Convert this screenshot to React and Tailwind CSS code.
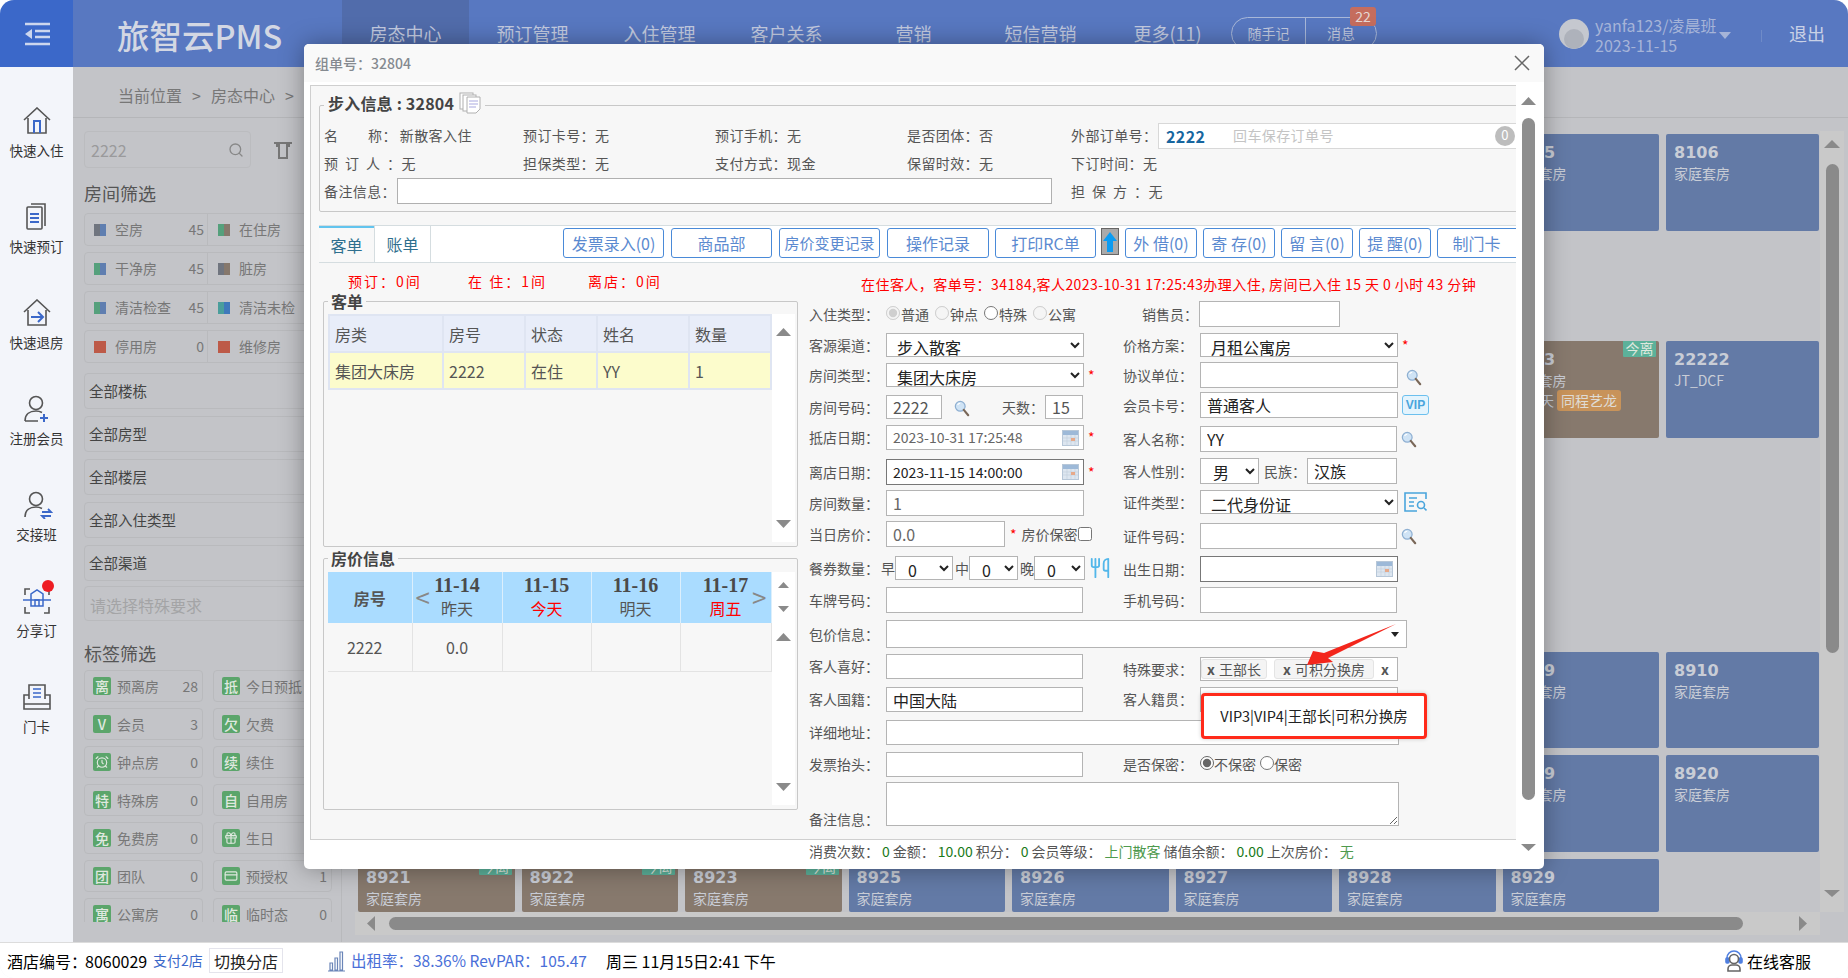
import { AlarmClock, Gift, CreditCard, Utensils, Search } from "lucide-react";

const Tri = ({ dir = "up", w = 15, h = 8, color = "#8a8a8a", className = "" }) => (
  <svg width={w} height={h} viewBox="0 0 10 10" preserveAspectRatio="none" className={className}>
    {dir === "up" && <polygon points="5,0 10,10 0,10" fill={color} />}
    {dir === "down" && <polygon points="0,0 10,0 5,10" fill={color} />}
    {dir === "left" && <polygon points="10,0 10,10 0,5" fill={color} />}
    {dir === "right" && <polygon points="0,0 0,10 10,5" fill={color} />}
  </svg>
);

const Glass = ({ className = "" }) => (
  <svg width="16" height="18" viewBox="0 0 18 20" className={`shrink-0 ${className}`}>
    <circle cx="7" cy="7" r="5.5" fill="#cfe3f5" stroke="#8fb0d2" strokeWidth="1.4" />
    <path d="M4 5.5a3.5 3.5 0 0 1 3-2" stroke="#fff" strokeWidth="1.2" fill="none" />
    <path d="M11 11l5 6" stroke="#7a6859" strokeWidth="2.4" strokeLinecap="round" />
  </svg>
);

const Cal = () => (
  <svg width="17" height="16" viewBox="0 0 17 16" className="ml-auto shrink-0">
    <rect x="0.5" y="0.5" width="16" height="15" fill="#dde6f0" stroke="#b7c7d8" />
    <rect x="1" y="1" width="15" height="4" fill="#9db9d8" />
    <path d="M1 8h15M1 11h15M5 5v10M9 5v10M13 5v10" stroke="#c3d0de" strokeWidth="0.7" />
    <rect x="9" y="8" width="4" height="3" fill="#e6a98a" />
  </svg>
);

const SideItem = ({ label, children }) => (
  <div className="flex flex-col items-center">
    <div className="relative h-[26px] w-[32px]">{children}</div>
    <div className="mt-[7px] h-[20px] text-[13.5px] leading-[20px] text-[#333]">{label}</div>
  </div>
);

const iconProps = { width: 32, height: 28, viewBox: "0 0 32 28", fill: "none", stroke: "#555", strokeWidth: 1.6 };

const Sidebar = () => (
  <div className="flex w-[73px] shrink-0 flex-col items-center gap-[43px] bg-[#f3f5fa] pt-[40px]">
    <SideItem label="快速入住">
      <svg {...iconProps}>
        <path d="M3 13 16 1l13 12M7 11v15h18V11" />
        <path d="M13 26V14h6v12" stroke="#3b68c9" strokeWidth="2" />
      </svg>
    </SideItem>
    <SideItem label="快速预订">
      <svg {...iconProps}>
        <path d="M10 1h14v22" />
        <rect x="6" y="4" width="15" height="22" rx="1" />
        <path d="M9 11h9M9 15h9M9 19h9" stroke="#3b68c9" strokeWidth="2" />
      </svg>
    </SideItem>
    <SideItem label="快速退房">
      <svg {...iconProps}>
        <path d="M3 13 16 1l13 12M7 11v15h18V11" />
        <path d="M10 18h11M17 13l5 5-5 5" stroke="#3b68c9" strokeWidth="2" />
      </svg>
    </SideItem>
    <SideItem label="注册会员">
      <svg {...iconProps}>
        <circle cx="15" cy="8" r="6.5" />
        <path d="M4 26c0-7 5-10 11-10 2 0 4 .4 6 1.500M4 26h13" />
        <path d="M23 19v8M19 23h8" stroke="#3b68c9" strokeWidth="2" />
      </svg>
    </SideItem>
    <SideItem label="交接班">
      <svg {...iconProps}>
        <circle cx="15" cy="8" r="6.500" />
        <path d="M4 26c0-7 5-10 11-10 2 0 4 .4 6 1.500" />
        <path d="M21 21h9l-3-3M30 25h-9l3 3" stroke="#3b68c9" strokeWidth="1.800" />
      </svg>
    </SideItem>
    <SideItem label="分享订">
      <svg {...iconProps}>
        <path d="M9 2H4v6M23 2h5v6M4 20v6h5M28 20v6h-5" />
        <path d="M2 13h28" stroke="#3b68c9" strokeWidth="1.500" />
        <path d="M10 19V7l6-4 6 4v12zM14 19v-6h4v6" stroke="#3b68c9" strokeWidth="1.500" />
      </svg>
      <div className="absolute left-[21px] top-[-7px] h-[12px] w-[12px] rounded-full bg-[#ee1d23]" />
    </SideItem>
    <SideItem label="门卡">
      <svg {...iconProps}>
        <path d="M8 16V2h16v14" />
        <path d="M8 12H3v14h26V12h-5M3 21h26" />
        <path d="M12 6h8M12 10h8M12 14h8" stroke="#3b68c9" strokeWidth="1.500" />
      </svg>
    </SideItem>
  </div>
);

const navs = ["房态中心", "预订管理", "入住管理", "客户关系", "营销", "短信营销", "更多(11)"];

const Header = () => (
  <div className="flex h-[67px] shrink-0">
    <div className="flex w-[73px] items-center justify-center bg-[#3b68c9]">
      <svg width="26" height="24" viewBox="0 0 26 24" fill="none" stroke="#ccd6ee" strokeWidth="2.400">
        <path d="M1 2h25M11 9h15M11 15h15M1 22h25" />
        <polygon points="8,7 8,17 1,12" fill="#ccd6ee" stroke="none" />
      </svg>
    </div>
    <div className="flex flex-1 items-stretch bg-[#5878c1]">
      <div className="w-[269px] pl-[44px] text-[32.500px] font-medium leading-[69px] text-[#d3d7e3]">旅智云PMS</div>
      {navs.map((n, i) => (
        <div key={n} className={`flex w-[127px] items-center justify-center text-[18px] text-[#c3cbe0] ${i === 0 ? "bg-[#516cab]" : ""}`}>
          {n}
        </div>
      ))}
      <div className="relative mt-[17px] flex h-[33px] w-[146px] rounded-full border border-[#a9b8d9] text-[14px] leading-[30px] text-[#c3cbe0]">
        <div className="w-[74px] border-r border-[#a9b8d9] text-center">随手记</div>
        <div className="flex-1 text-center">消息</div>
        <div className="absolute left-[118px] top-[-11px] h-[19px] w-[26px] rounded-[3px] bg-[#c56d5e] text-center text-[14px] leading-[19px] text-[#e6d8d4]">22</div>
      </div>
      <div className="ml-[182px] mt-[19px] flex h-[30px] w-[30px] items-end justify-center overflow-hidden rounded-full bg-[#c5c8cf]">
        <div className="h-[20px] w-[20px] rounded-full bg-[#aeb2bb]" />
      </div>
      <div className="ml-[6px] mt-[15px] w-[118px] text-[16px] leading-[20px] text-[#a6b4d8]">
        <div className="whitespace-nowrap">yanfa123/凌晨班</div>
        <div>2023-11-15</div>
      </div>
      <Tri dir="down" w={12} h={7} color="#a6b4d8" className="ml-[6px] mt-[32px]" />
      <div className="ml-[30px] mt-[30px] h-[12px] border-l border-[#6f8bc8]" />
      <div className="ml-[27px] text-[18px] leading-[67px] text-[#c9d1e6]">退出</div>
    </div>
  </div>
);

const Swatch = ({ a, b }) => (
  <div className="flex h-[12px] w-[12px] shrink-0">
    <div className="w-1/2" style={{ background: a }} />
    <div className="w-1/2" style={{ background: b }} />
  </div>
);

const roomRows = [
  [["空房", 45, "#70757f", "#5f7eb0"], ["在住房", 45, "#55a07c", "#86786c"]],
  [["干净房", 45, "#55a07c", "#5f7eb0"], ["脏房", 45, "#70757f", "#86786c"]],
  [["清洁检查", 45, "#55a07c", "#5f7eb0"], ["清洁未检", 45, "#4a9e9c", "#3f79bb"]],
  [["停用房", 0, "#bd5a48", "#bd5a48"], ["维修房", 0, "#bd5a48", "#bd5a48"]],
];

const tags = [
  ["离", "预离房", 28, "抵", "今日预抵", 0],
  ["V", "会员", 3, "欠", "欠费", 0],
  ["clock", "钟点房", 0, "续", "续住", 0],
  ["特", "特殊房", 0, "自", "自用房", 0],
  ["免", "免费房", 0, "gift", "生日", 0],
  ["团", "团队", 0, "card", "预授权", 1],
  ["寓", "公寓房", 0, "临", "临时态", 0],
];

const TagMark = ({ t }) => (
  <div className="flex h-[18px] w-[18px] shrink-0 items-center justify-center rounded-[2px] bg-[#5ba56b] text-[14px] font-medium leading-none text-[#dfe8df]">
    {t === "clock" ? <AlarmClock size={14} /> : t === "gift" ? <Gift size={14} /> : t === "card" ? <CreditCard size={14} /> : t}
  </div>
);

const Tag = ({ mark, label, count }) => (
  <div className="flex h-[32px] w-[119px] items-center rounded-[4px] border border-[#b9babd] pl-[8px] pr-[4px] text-[14px] text-[#777]">
    <TagMark t={mark} />
    <span className="ml-[6px] flex-1">{label}</span>
    <span>{count}</span>
  </div>
);

const FilterPanel = () => (
  <div className="w-[269px] shrink-0 border-r border-[#b8b9bc] pl-[11px]">
    <div className="mt-[13px] flex items-center">
      <div className="flex h-[37px] w-[167px] items-center justify-between rounded-[4px] border border-[#bbbcbf] px-[6px] text-[16px] text-[#9a9a9c]">
        2222
        <Search size={16} color="#888" />
      </div>
      <svg width="20" height="18" viewBox="0 0 20 18" fill="none" stroke="#777" strokeWidth="2" className="ml-[22px]">
        <path d="M1 2h18M4 2v4M16 2v4M6 2v15h8V2" />
      </svg>
    </div>
    <div className="mt-[13px] h-[24px] text-[18px] leading-[24px] text-[#555]">房间筛选</div>
    <div className="mt-[8px] flex flex-col gap-[6px]">
      {roomRows.map((row, i) => (
        <div key={i} className="flex h-[33px] w-[248px] rounded-[4px] border border-[#b9babd] text-[14px] text-[#777]">
          <div className="flex w-[123px] items-center border-r border-[#b9babd] pl-[9px] pr-[3px]">
            <Swatch a={row[0][2]} b={row[0][3]} />
            <span className="ml-[9px] flex-1">{row[0][0]}</span>
            <span>{row[0][1]}</span>
          </div>
          <div className="flex flex-1 items-center pl-[10px] pr-[3px]">
            <Swatch a={row[1][2]} b={row[1][3]} />
            <span className="ml-[9px] flex-1">{row[1][0]}</span>
            <span>{row[1][1]}</span>
          </div>
        </div>
      ))}
    </div>
    <div className="mt-[10px] flex flex-col gap-[7px]">
      {["全部楼栋", "全部房型", "全部楼层", "全部入住类型", "全部渠道"].map((s) => (
        <div key={s} className="flex h-[36px] w-[248px] items-center rounded-[4px] border border-[#b9babd] pl-[4px] text-[14.5px] text-[#444]">
          {s}
        </div>
      ))}
    </div>
    <div className="mt-[5px] flex h-[35px] w-[248px] items-center rounded-[4px] border border-[#b9babd] pl-[5px] pt-[3px] text-[16px] text-[#a4a4a6]">请选择特殊要求</div>
    <div className="mt-[20px] h-[24px] text-[18px] leading-[24px] text-[#555]">标签筛选</div>
    <div className="mt-[5px] grid h-[252px] w-[248px] grid-cols-[119px_119px] content-start gap-x-[10px] gap-y-[6px] overflow-hidden">
      {tags.map((t) => [
        <Tag key={t[1]} mark={t[0]} label={t[1]} count={t[2]} />,
        <Tag key={t[4]} mark={t[3]} label={t[4]} count={t[5]} />,
      ])}
    </div>
  </div>
);

const RoomCard = ({ no, name = "家庭套房", brown, extra, leave, className = "" }) => (
  <div className={`relative overflow-hidden rounded-[2px] px-[8px] pt-[9px] text-[#c9cdd6] ${brown ? "bg-[#87796d]" : "bg-[#637aa6]"} ${className}`}>
    {leave && <div className="absolute right-[3px] top-[-2px] h-[18px] w-[33px] rounded-[1px] bg-[#5cb19a] text-center text-[14px] leading-[18px] text-[#dfe8df]">今离</div>}
    <div className="font-['DejaVu_Sans',sans-serif] text-[16px] font-bold leading-[20px]">{no}</div>
    <div className="text-[14px] leading-[20px]">{name}</div>
    {extra}
  </div>
);

const RoomGrid = () => (
  <div className="flex h-[794px]">
    <div className="w-[1478px] overflow-hidden pl-[16px]">
      <div className="mt-[16px] grid h-[97px] grid-cols-[repeat(9,156.500px)] gap-x-[7px]">
        <RoomCard no="8105" className="col-start-8" />
        <RoomCard no="8106" className="col-start-9 w-[153px]" />
      </div>
      <div className="mt-[110px] grid h-[97px] grid-cols-[repeat(9,156.500px)] gap-x-[7px]">
        <RoomCard
          no="8103"
          brown
          leave
          className="col-start-8"
          extra={
            <div className="flex items-center text-[14px] leading-[21px]">
              住15天
              <span className="ml-[3px] rounded-[3px] bg-[#c8935a] px-[4px] text-[#dfdcd6]">同程艺龙</span>
            </div>
          }
        />
        <RoomCard no="22222" name="JT_DCF" className="col-start-9 w-[153px]" />
      </div>
      <div className="mt-[214px] grid h-[96px] grid-cols-[repeat(9,156.500px)] gap-x-[7px]">
        <RoomCard no="8909" className="col-start-8" />
        <RoomCard no="8910" className="col-start-9 w-[153px]" />
      </div>
      <div className="mt-[7px] grid h-[97px] grid-cols-[repeat(9,156.500px)] gap-x-[7px]">
        <RoomCard no="8919" className="col-start-8" />
        <RoomCard no="8920" className="col-start-9 w-[153px]" />
      </div>
      <div className="mt-[7px] grid h-[53px] grid-cols-[repeat(9,156.500px)] gap-x-[7px]">
        {["8921", "8922", "8923"].map((n) => (
          <RoomCard
            key={n}
            no={n}
            brown
            leave
            extra={<div className="mt-[10px] ml-[46px] h-[10px] w-[64px] rounded-[3px] bg-[#c8935a]" />}
          />
        ))}
        {["8925", "8926", "8927", "8928", "8929"].map((n) => (
          <RoomCard key={n} no={n} />
        ))}
      </div>
    </div>
    <div className="mt-[13px] flex w-[24px] flex-col items-center bg-[#c9c9c9] pt-[9px] pb-[15px]">
      <Tri w={16} h={8} />
      <div className="mt-[16px] h-[489px] w-[13px] rounded-full bg-[#8a8a8a]" />
      <Tri dir="down" w={16} h={7} className="mt-auto" />
    </div>
  </div>
);

const HScroll = () => (
  <div className="ml-[13px] flex h-[23px] w-[1465px] items-center bg-[#c9c9c9]">
    <Tri dir="left" w={8} h={15} className="ml-[12px]" />
    <div className="ml-[14px] h-[13px] w-[1354px] rounded-full bg-[#8a8a8a]" />
    <Tri dir="right" w={8} h={15} className="ml-[56px]" />
  </div>
);

const BottomBar = () => (
  <div className="flex h-[36px] shrink-0 items-center border-t border-[#dcdcdc] bg-white pl-[7px] text-[16px] text-black">
    <span className="w-[78px] whitespace-nowrap">酒店编号&#xFF1A;</span>
    <span className="w-[68px]">8060029</span>
    <span className="w-[56px] text-[14px] text-[#3b68c9]">支付2店</span>
    <div className="flex h-[25px] w-[74px] items-center justify-center border border-[#e4e4ec] text-[#222]">切换分店</div>
    <svg width="19" height="22" viewBox="0 0 19 22" fill="none" stroke="#6a85b8" strokeWidth="1.200" className="ml-[44px]">
      <path d="M1 21h17M3 20v-7h2.500v7zM8 20V8h2.500v12zM13 20V2h2.500v18z" />
    </svg>
    <span className="ml-[5px] w-[255px] whitespace-nowrap text-[15.500px] text-[#4a6fd8]">出租率&#xFF1A;38.36% RevPAR&#xFF1A;105.47</span>
    <span className="whitespace-nowrap">周三 11月15日2:41 下午</span>
    <svg width="18" height="22" viewBox="0 0 18 22" fill="none" stroke="#4f7fe0" strokeWidth="1.600" className="ml-auto">
      <path d="M2 11V8a7 7 0 0 1 14 0v3" />
      <rect x="1" y="8" width="3" height="5" rx="1" fill="#4f7fe0" />
      <rect x="14" y="8" width="3" height="5" rx="1" fill="#4f7fe0" />
      <circle cx="9" cy="9" r="4.500" stroke="#666" />
      <path d="M3 21v-2a4 4 0 0 1 4-4h4a4 4 0 0 1 4 4v2z" stroke="#666" />
    </svg>
    <span className="ml-[4px] mr-[37px]">在线客服</span>
  </div>
);

const Btn = ({ w, children, gap = "ml-[6px]" }) => (
  <div className={`flex h-[30px] shrink-0 items-center justify-center rounded-[3px] border border-[#4a8ad8] bg-white text-[16px] text-[#5b8ad0] ${w} ${gap}`}>
    {children}
  </div>
);

const Tabs = () => (
  <div className="mt-[13px] ml-[8px] flex h-[38px] w-[1200px] shrink-0 overflow-hidden border-y border-[#d5dde0] bg-white">
    <div className="-mt-px w-[55px] shrink-0 border-t-[3px] border-t-[#62c4ee] bg-[#f8f8f8] pt-[5px] text-center text-[16px] text-[#2e6f8e]">客单</div>
    <div className="w-[57px] shrink-0 border-x border-[#d5dde0] pt-[6px] text-center text-[16px] text-[#2e6f8e]">账单</div>
    <div className="flex items-start pt-[2px]">
      <Btn w="w-[101px]" gap="ml-[132px]">发票录入(0)</Btn>
      <Btn w="w-[101px]" gap="ml-[7px]">商品部</Btn>
      <Btn w="w-[101px]" gap="ml-[7px]"><span className="text-[15px]">房价变更记录</span></Btn>
      <Btn w="w-[102px]" gap="ml-[7px]">操作记录</Btn>
      <Btn w="w-[101px]" gap="ml-[6px]">打印RC单</Btn>
      <div className="ml-[5px] flex h-[27px] w-[18px] items-center justify-center border border-[#666] bg-[#aaa]">
        <svg width="14" height="22" viewBox="0 0 14 22">
          <polygon points="7,1 14,10 10,10 10,21 4,21 4,10 0,10" fill="#0c9cf2" />
        </svg>
      </div>
      <Btn w="w-[72px]">外 借(0)</Btn>
      <Btn w="w-[72px]">寄 存(0)</Btn>
      <Btn w="w-[72px]">留 言(0)</Btn>
      <Btn w="w-[72px]">提 醒(0)</Btn>
      <Btn w="w-[85px]"><span className="pr-[6px]">制门卡</span></Btn>
    </div>
  </div>
);

const Info = ({ children, className = "" }) => <div className={`whitespace-nowrap ${className}`}>{children}</div>;

const StepInfo = () => (
  <fieldset className="ml-[8px] mt-[8px] h-[118px] w-[1215px] rounded-[2px] border border-[#c8c8c8] pl-[4px]">
    <legend className="flex -translate-y-[2px] items-center px-[4px] text-[16px] font-bold leading-[22px] tracking-[0.2px] text-[#444]">
      步入信息 : 32804
      <svg width="22" height="22" viewBox="0 0 22 22" fill="#fff" stroke="#b0b0b0" className="ml-[5px]">
        <rect x="1" y="1" width="13" height="16" />
        <rect x="4" y="3" width="13" height="16" />
        <path d="M8 5h13v12l-4 4H8z" />
        <path d="M10 9h9M10 12h9M10 15h7" stroke="#a9a9df" />
      </svg>
    </legend>
    <div className="mt-[6px] grid grid-cols-[199px_192px_192px_164px_1fr] grid-rows-[27px_27px_26px] items-center gap-y-[1px] text-[14px] tracking-[0.4px] text-[#555]">
      <Info>
        <span className="tracking-[30px]">名</span>称&#xFF1A;<span className="ml-[3px]">新散客入住</span>
      </Info>
      <Info>预订卡号&#xFF1A;无</Info>
      <Info>预订手机&#xFF1A;无</Info>
      <Info>是否团体&#xFF1A;否</Info>
      <div className="flex h-[26px] w-[446px] items-center">
        <span className="w-[87px] whitespace-nowrap">外部订单号&#xFF1A;</span>
        <div className="flex h-full flex-1 items-center border border-[#d8d8d8] bg-white pl-[7px]">
          <span className="w-[67px] text-[16px] font-bold text-[#17669f]">2222</span>
          <span className="text-[#c4c4c4]">回车保存订单号</span>
          <span className="ml-auto mr-[1px] h-[20px] w-[20px] rounded-full bg-[#bdbdbd] text-center text-[13px] leading-[18px] text-white">0</span>
        </div>
      </div>
      <Info>
        <span className="tracking-[7px]">预订人</span>&#xFF1A;无
      </Info>
      <Info>担保类型&#xFF1A;无</Info>
      <Info>支付方式&#xFF1A;现金</Info>
      <Info>保留时效&#xFF1A;无</Info>
      <Info>下订时间&#xFF1A;无</Info>
      <div className="col-span-4 flex h-full items-center">
        <span className="w-[73px] whitespace-nowrap">备注信息&#xFF1A;</span>
        <div className="h-full w-[655px] border border-[#b0b0b0] bg-white" />
      </div>
      <Info>
        <span className="tracking-[7px]">担保方</span>&#xFF1A;无
      </Info>
    </div>
  </fieldset>
);

const thCell = "border-2 border-[#dfe5f2] bg-[#e8edf9] pl-[5px] text-left font-normal";
const tdCell = "border-2 border-[#dfe5f2] bg-[#fcfccc] pl-[5px]";

const ScrollCol = ({ children, h }) => (
  <div className={`flex w-[23px] flex-col items-center bg-white ${h}`}>{children}</div>
);

const OrderBox = () => (
  <fieldset className="h-[257px] w-[475px] rounded-[2px] border border-[#c8c8c8] pl-[4px]">
    <legend className="px-[3px] text-[16px] font-bold leading-[22px] text-[#444]">客单</legend>
    <div className="mt-[2px] flex">
      <table className="h-[75px] w-[442px] table-fixed self-start text-[16px] text-[#555]">
        <colgroup>
          <col className="w-[114px]" />
          <col className="w-[82px]" />
          <col className="w-[72px]" />
          <col className="w-[92px]" />
          <col className="w-[82px]" />
        </colgroup>
        <thead>
          <tr className="h-[37px]">
            {["房类", "房号", "状态", "姓名", "数量"].map((t) => (
              <th key={t} className={thCell}>{t}</th>
            ))}
          </tr>
        </thead>
        <tbody>
          <tr className="h-[37px]">
            {["集团大床房", "2222", "在住", "YY", "1"].map((t) => (
              <td key={t} className={tdCell}>{t}</td>
            ))}
          </tr>
        </tbody>
      </table>
      <ScrollCol h="h-[228px]">
        <Tri w={15} h={8} className="mt-[14px]" />
        <Tri dir="down" w={15} h={8} className="mt-auto mb-[14px]" />
      </ScrollCol>
    </div>
  </fieldset>
);

const days = [
  ["11-14", "昨天", false],
  ["11-15", "今天", true],
  ["11-16", "明天", false],
  ["11-17", "周五", true],
];

const PriceBox = () => (
  <fieldset className="h-[263px] w-[475px] rounded-[2px] border border-[#c8c8c8] pl-[4px]">
    <legend className="px-[3px] text-[16px] font-bold leading-[22px] text-[#444]">房价信息</legend>
    <div className="mt-[3px] flex">
      <table className="w-[443px] table-fixed self-start text-[16px] text-[#555]">
        <colgroup>
          <col className="w-[84px]" />
          <col className="w-[90px]" />
          <col className="w-[89px]" />
          <col className="w-[89px]" />
          <col className="w-[91px]" />
        </colgroup>
        <thead>
          <tr className="h-[51px] bg-[#aadcff]">
            <th className="border-r border-[#dceffc] font-bold">房号</th>
            {days.map((d, i) => (
              <th key={d[0]} className="relative border-r border-[#dceffc] font-normal leading-[23px]">
                <div className="-mt-[2px] font-['Liberation_Serif',serif] text-[20px] font-bold text-[#4a4a4a]">{d[0]}</div>
                <div className={d[2] ? "text-[#f00]" : ""}>{d[1]}</div>
                {i === 0 && <span className="absolute left-[3px] top-[13px] text-[26px] leading-[24px] text-[#888]">&lt;</span>}
                {i === 3 && <span className="absolute right-[4px] top-[13px] text-[26px] leading-[24px] text-[#888]">&gt;</span>}
              </th>
            ))}
          </tr>
        </thead>
        <tbody>
          <tr className="h-[48px] border-b border-[#e3e3e3]">
            <td className="border-r border-[#e3e3e3] pr-[10px] text-center">2222</td>
            <td className="border-r border-[#e3e3e3] text-center">0.0</td>
            <td className="border-r border-[#e3e3e3]" />
            <td className="border-r border-[#e3e3e3]" />
            <td className="border-r border-[#e3e3e3]" />
          </tr>
        </tbody>
      </table>
      <ScrollCol h="h-[233px]">
        <Tri w={11} h={6} className="mt-[10px]" />
        <Tri dir="down" w={11} h={6} className="mt-[18px]" />
        <Tri w={15} h={8} className="mt-[21px]" />
        <Tri dir="down" w={15} h={8} className="mt-auto mb-[14px]" />
      </ScrollCol>
    </div>
  </fieldset>
);

const inputCls = "h-full shrink-0 border border-[#b4b4b4] bg-white px-[6px] text-[16px] text-[#222] outline-none";
const selectCls = "h-full shrink-0 border border-[#b4b4b4] bg-white pl-[6px] text-[16px] text-[#222] outline-none";

const Field = ({ label, className = "", children }) => (
  <div className={`flex items-center ${className}`}>
    <span className="w-[77px] shrink-0 whitespace-nowrap text-[14px] text-[#555]">{label}</span>
    {children}
  </div>
);

const Star = () => <span className="ml-[4px] text-[14px] text-[#f00]">*</span>;

const DateBox = ({ value, dark }) => (
  <div className={`flex h-full w-[198px] shrink-0 items-center border bg-white pl-[6px] pr-[4px] text-[14px] ${dark ? "border-[#777] text-[#222]" : "border-[#b4b4b4] text-[#666]"}`}>
    {value}
    <Cal />
  </div>
);

const Radio = ({ label, checked, disabled }) => (
  <label className="flex items-center text-[14px] text-[#555]">
    <input type="radio" name="t" readOnly checked={checked} disabled={disabled} className="m-0 h-[14px] w-[14px] -translate-y-[2px]" />
    <span className="ml-px">{label}</span>
  </label>
);

const LeftForm = () => (
  <div className="w-[314px] shrink-0">
    <Field label="入住类型&#xFF1A;" className="h-[27px]">
      <div className="flex gap-[6px]">
        <Radio label="普通" checked disabled />
        <Radio label="钟点" disabled />
        <Radio label="特殊" />
        <Radio label="公寓" disabled />
      </div>
    </Field>
    <Field label="客源渠道&#xFF1A;" className="mt-[5px] h-[24px]">
      <select className={`${selectCls} w-[198px]`}><option>步入散客</option></select>
    </Field>
    <Field label="房间类型&#xFF1A;" className="mt-[6px] h-[24px]">
      <select className={`${selectCls} w-[198px]`}><option>集团大床房</option></select>
      <Star />
    </Field>
    <Field label="房间号码&#xFF1A;" className="mt-[8px] h-[24px]">
      <input readOnly value="2222" className={`${inputCls} w-[56px] text-[#555]`} />
      <Glass className="ml-[12px] mt-[4px]" />
      <span className="ml-[32px] w-[43px] whitespace-nowrap text-[14px] text-[#555]">天数&#xFF1A;</span>
      <input readOnly value="15" className={`${inputCls} w-[38px] text-[#555]`} />
    </Field>
    <Field label="抵店日期&#xFF1A;" className="mt-[6px] h-[25px]">
      <DateBox value="2023-10-31 17:25:48" />
      <Star />
    </Field>
    <Field label="离店日期&#xFF1A;" className="mt-[9px] h-[26px]">
      <DateBox value="2023-11-15 14:00:00" dark />
      <Star />
    </Field>
    <Field label="房间数量&#xFF1A;" className="mt-[5px] h-[26px]">
      <input readOnly value="1" className={`${inputCls} w-[198px] text-[#666]`} />
    </Field>
    <Field label="当日房价&#xFF1A;" className="mt-[5px] h-[26px]">
      <input readOnly value="0.0" className={`${inputCls} w-[119px] text-[#666]`} />
      <span className="ml-[5px] text-[14px] text-[#f00]">*</span>
      <span className="ml-[5px] whitespace-nowrap text-[14px] text-[#555]">房价保密</span>
      <input type="checkbox" className="h-[14px] w-[14px]" />
    </Field>
    <Field label="餐券数量&#xFF1A;" className="mt-[9px] h-[24px]">
      <span className="-ml-[5px] w-[14px] text-[14px] text-[#555]">早</span>
      <select className={`${selectCls} w-[58px] pl-[8px]`}><option>0</option></select>
      <span className="ml-[2px] w-[14px] text-[14px] text-[#555]">中</span>
      <select className={`${selectCls} w-[49px] pl-[8px]`}><option>0</option></select>
      <span className="ml-[2px] w-[14px] text-[14px] text-[#555]">晚</span>
      <select className={`${selectCls} w-[51px] pl-[8px]`}><option>0</option></select>
      <Utensils size={22} color="#53b7ea" className="ml-[4px] shrink-0" />
    </Field>
    <Field label="车牌号码&#xFF1A;" className="mt-[7px] h-[26px]">
      <input readOnly className={`${inputCls} w-[197px]`} />
    </Field>
  </div>
);

const RightForm = () => (
  <div className="w-[330px] shrink-0">
    <div className="flex h-[26px] items-center">
      <span className="w-[76px] whitespace-nowrap pl-[19px] text-[14px] text-[#555]">销售员&#xFF1A;</span>
      <input readOnly className={`${inputCls} w-[141px]`} />
    </div>
    <Field label="价格方案&#xFF1A;" className="mt-[6px] h-[24px]">
      <select className={`${selectCls} w-[198px]`}><option>月租公寓房</option></select>
      <Star />
    </Field>
    <Field label="协议单位&#xFF1A;" className="mt-[5px] h-[26px]">
      <input readOnly className={`${inputCls} w-[198px]`} />
      <Glass className="ml-[8px] mt-[6px]" />
    </Field>
    <Field label="会员卡号&#xFF1A;" className="mt-[4px] h-[26px]">
      <input readOnly value="普通客人" className={`${inputCls} w-[198px]`} />
      <div className="ml-[4px] flex h-[20px] w-[27px] shrink-0 items-center justify-center rounded-[3px] border border-[#6cc0ee] bg-[#e4f4fd] font-['Liberation_Sans',sans-serif] text-[12px] font-bold text-[#4aa5dc]">VIP</div>
    </Field>
    <Field label="客人名称&#xFF1A;" className="mt-[8px] h-[26px]">
      <input readOnly value="YY" className={`${inputCls} w-[197px]`} />
      <Glass className="ml-[4px] mt-[2px]" />
    </Field>
    <Field label="客人性别&#xFF1A;" className="mt-[6px] h-[26px]">
      <select className={`${selectCls} w-[59px] pl-[8px]`}><option>男</option></select>
      <span className="ml-[5px] w-[43px] whitespace-nowrap text-[14px] text-[#555]">民族&#xFF1A;</span>
      <input readOnly value="汉族" className={`${inputCls} w-[90px]`} />
    </Field>
    <Field label="证件类型&#xFF1A;" className="mt-[6px] h-[24px]">
      <select className={`${selectCls} w-[198px]`}><option>二代身份证</option></select>
      <svg width="23" height="20" viewBox="0 0 23 20" fill="none" stroke="#4aa5dc" strokeWidth="1.600" className="ml-[6px] shrink-0">
        <path d="M22 7V1H1v18h12" />
        <path d="M5 6h8M5 10h5M5 14h5" />
        <circle cx="17" cy="13" r="3.500" />
        <path d="M20 16l2.500 2.500" />
      </svg>
    </Field>
    <Field label="证件号码&#xFF1A;" className="mt-[9px] h-[26px]">
      <input readOnly className={`${inputCls} w-[197px]`} />
      <Glass className="ml-[4px] mt-[2px]" />
    </Field>
    <Field label="出生日期&#xFF1A;" className="mt-[7px] h-[26px]">
      <DateBox value="" dark />
    </Field>
    <Field label="手机号码&#xFF1A;" className="mt-[5px] h-[26px]">
      <input readOnly className={`${inputCls} w-[197px]`} />
    </Field>
  </div>
);

const Chip = ({ w, children }) => (
  <div className={`flex h-[20px] items-center justify-center rounded-[3px] border border-[#e4e4e4] bg-[#f4f4f4] text-[14px] text-[#555] ${w}`}>
    <span className="mr-[4px] font-bold">x</span>
    {children}
  </div>
);

const Form = () => (
  <div className="ml-[11px] w-[720px] shrink-0">
    <div className="h-[38px] whitespace-nowrap pl-[52px] pt-[12px] text-[14px] leading-[18px] tracking-[0.45px] text-[#f00]">
      在住客人&#xFF0C;客单号&#xFF1A;34184,客人2023-10-31 17:25:43办理入住, 房间已入住 15 天 0 小时 43 分钟
    </div>
    <div className="flex">
      <LeftForm />
      <RightForm />
    </div>
    <Field label="包价信息&#xFF1A;" className="mt-[7px] h-[28px]">
      <div className="flex h-full w-[521px] items-center justify-end border border-[#b4b4b4] bg-white pr-[7px]">
        <Tri dir="down" w={8} h={5} color="#222" />
      </div>
    </Field>
    <div className="mt-[6px] flex h-[25px]">
      <Field label="客人喜好&#xFF1A;" className="w-[314px]">
        <input readOnly className={`${inputCls} w-[197px]`} />
      </Field>
      <Field label="特殊要求&#xFF1A;" className="mt-[3px] h-[24px]">
        <div className="flex h-full w-[198px] items-center gap-[7px] border border-[#b4b4b4] bg-white text-[#555]">
          <Chip w="w-[66px]">王部长</Chip>
          <Chip w="w-[100px]">可积分换房</Chip>
          <span className="text-[14px] font-bold">x</span>
        </div>
      </Field>
    </div>
    <div className="mt-[8px] flex h-[25px]">
      <Field label="客人国籍&#xFF1A;" className="w-[314px]">
        <input readOnly value="中国大陆" className={`${inputCls} w-[197px]`} />
      </Field>
      <Field label="客人籍贯&#xFF1A;">
        <input readOnly className={`${inputCls} w-[198px]`} />
      </Field>
    </div>
    <Field label="详细地址&#xFF1A;" className="mt-[8px] h-[25px]">
      <input readOnly className={`${inputCls} w-[513px]`} />
    </Field>
    <div className="mt-[7px] flex h-[25px]">
      <Field label="发票抬头&#xFF1A;" className="w-[314px]">
        <input readOnly className={`${inputCls} w-[197px]`} />
      </Field>
      <Field label="是否保密&#xFF1A;">
        <div className="flex gap-[4px]">
          <label className="flex items-center text-[14px] text-[#555]">
            <input type="radio" name="s" readOnly checked className="m-0 h-[14px] w-[14px] -translate-y-[2px] accent-[#666]" />
            不保密
          </label>
          <label className="flex items-center text-[14px] text-[#555]">
            <input type="radio" name="s" readOnly className="m-0 h-[14px] w-[14px] -translate-y-[2px]" />
            保密
          </label>
        </div>
      </Field>
    </div>
    <div className="mt-[5px] flex h-[44px] items-end">
      <span className="w-[77px] shrink-0 translate-y-[3px] whitespace-nowrap text-[14px] leading-[20px] text-[#555]">备注信息&#xFF1A;</span>
      <textarea readOnly className="h-full w-[513px] border border-[#b4b4b4] bg-white outline-none" />
    </div>
  </div>
);

const Modal = () => (
  <div className="absolute left-[304px] top-[44px] flex h-[825px] w-[1240px] flex-col rounded-[5px] bg-white shadow-[0_0_24px_rgba(0,0,0,0.35)]">
    <div className="flex h-[38px] shrink-0 items-center justify-between rounded-t-[5px] bg-[#f9f9f9] pl-[11px] pr-[14px] text-[14px] font-medium text-[#858a90]">
      组单号&#xFF1A;32804
      <svg width="16" height="16" viewBox="0 0 16 16" stroke="#666" strokeWidth="1.500">
        <path d="M1 1l14 14M15 1 1 15" />
      </svg>
    </div>
    <div className="mt-[3px] flex flex-1">
      <div className="ml-[6px] flex w-[1206px] flex-col">
        <div className="h-[755px] overflow-hidden border-b border-l border-t border-[#cfcfcf] bg-[#f7f7f7]">
          <StepInfo />
          <Tabs />
          <div className="flex">
            <div className="ml-[12px] w-[475px] shrink-0">
              <div className="flex h-[27px] items-end whitespace-nowrap text-[14px] leading-[18px] tracking-[2px] text-[#f00]">
                <span className="ml-[25px] w-[120px]">预订&#xFF1A;0间</span>
                <span className="w-[120px]">在 住&#xFF1A;1间</span>
                <span>离店&#xFF1A;0间</span>
              </div>
              <OrderBox />
              <PriceBox />
            </div>
            <Form />
          </div>
        </div>
        <div className="flex h-[23px] items-center whitespace-nowrap bg-white pl-[499px] text-[14px] text-[#555]">
          消费次数&#xFF1A;<span className="mx-[3px] text-[#1a7a1a]">0</span>
          金额&#xFF1A;<span className="mx-[3px] text-[#1a7a1a]">10.00</span>
          积分&#xFF1A;<span className="mx-[3px] text-[#1a7a1a]">0</span>
          会员等级&#xFF1A;<span className="mx-[3px] text-[#4e9a4e]">上门散客</span>
          储值余额&#xFF1A;<span className="mx-[3px] text-[#1a7a1a]">0.00</span>
          上次房价&#xFF1A;<span className="ml-[3px] text-[#4e9a4e]">无</span>
        </div>
      </div>
      <div className="flex h-[766px] w-[24px] flex-col items-center pt-[12px]">
        <Tri w={15} h={8} />
        <div className="mt-[13px] h-[682px] w-[13px] rounded-full bg-[#8e8e8e]" />
        <Tri dir="down" w={15} h={7} className="mt-auto" />
      </div>
    </div>

    <svg width="90" height="42" viewBox="0 0 90 42" className="absolute left-[1003px] top-[580px] z-10">
      <polygon points="89,0 17,29 6,27 0,41 26,38 21,34" fill="#f3261c" />
    </svg>
    <div className="absolute left-[897px] top-[649px] z-10 flex h-[46px] w-[226px] items-center justify-center whitespace-nowrap rounded-[4px] border-[3px] border-[#ff2a1a] bg-white text-[14.500px] text-[#222] shadow-[0_0_4px_rgba(0,0,0,0.2)]">
      VIP3|VIP4|王部长|可积分换房
    </div>
  </div>
);

export default function App() {
  return (
    <div className="relative h-[978px] w-[1848px] overflow-hidden rounded-[14px] bg-[#eef2f8] font-['Noto_Sans_CJK_SC','Noto_Sans',sans-serif]">
      <div className="flex h-full flex-col">
        <Header />
        <div className="flex flex-1 overflow-hidden">
          <Sidebar />
          <div className="flex flex-1 flex-col bg-[#c3c4c8]">
            <div className="flex h-[51px] shrink-0 items-center gap-[10px] border-b border-[#b5b6b9] pl-[45px] pt-[6px] text-[16px] text-[#777]">
              当前位置 <span>&gt;</span> 房态中心 <span>&gt;</span>
            </div>
            <div className="flex flex-1">
              <FilterPanel />
              <div className="flex-1">
                <RoomGrid />
                <HScroll />
              </div>
            </div>
          </div>
        </div>
        <BottomBar />
      </div>
      <Modal />
    </div>
  );
}
